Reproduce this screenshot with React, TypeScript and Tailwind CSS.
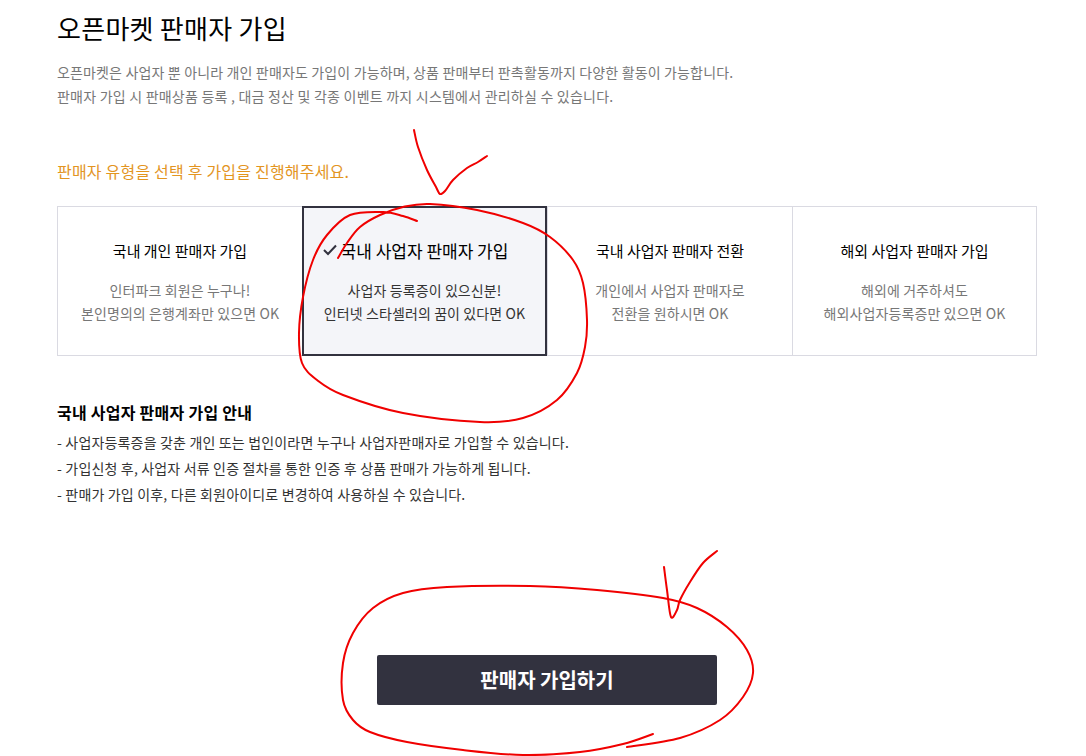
const FONT = "font-['Noto_Sans_CJK_KR','Noto_Sans',sans-serif]";

function smooth(p: number[][]) {
  let d = `M${p[0][0]} ${p[0][1]}`;
  for (let i = 0; i < p.length - 1; i++) {
    const a = p[Math.max(i - 1, 0)], b = p[i], c = p[i + 1], e = p[Math.min(i + 2, p.length - 1)];
    d += ` C${b[0] + (c[0] - a[0]) / 6} ${b[1] + (c[1] - a[1]) / 6} ${c[0] - (e[0] - b[0]) / 6} ${c[1] - (e[1] - b[1]) / 6} ${c[0]} ${c[1]}`;
  }
  return d;
}

const check1 = [[414,130],[418,147],[427,170],[436,187],[440,194],[445,191],[453,180],[467,168],[478,162],[487,156]];
const circle1 = [[417,221],[403,216],[383,212],[350,215],[327,235],[313,260],[303,297],[299,333],[302,363],[317,380],[343,395],[403,413],[480,422],[523,418],[557,400],[577,373],[585,347],[587,320],[583,283],[573,260],[550,237],[523,223],[477,210],[430,204],[403,207],[380,215],[360,227],[347,243],[338,258]];
const check2 = [[664,567],[667,590],[671,617],[677,610],[680,600],[690,582],[703,563],[717,551]];
const circle2 = [[627,747],[680,738],[720,720],[743,697],[753,673],[747,650],[727,627],[697,608],[663,598],[597,590],[530,586],[447,587],[403,593],[373,608],[353,633],[343,663],[343,700],[353,720],[370,732],[407,742],[463,750],[523,755],[580,752],[623,744],[653,734]];

const cards = [
  { t: "국내 개인 판매자 가입", a: "인터파크 회원은 누구나!", b: "본인명의의 은행계좌만 있으면 OK" },
  { t: "국내 사업자 판매자 가입", a: "사업자 등록증이 있으신분!", b: "인터넷 스타셀러의 꿈이 있다면 OK", on: true },
  { t: "국내 사업자 판매자 전환", a: "개인에서 사업자 판매자로", b: "전환을 원하시면 OK" },
  { t: "해외 사업자 판매자 가입", a: "해외에 거주하셔도", b: "해외사업자등록증만 있으면 OK" },
];

export default function App() {
  return (
    <div className={`relative h-[756px] w-[1086px] overflow-hidden bg-white ${FONT}`}>
      <div className="ml-[57px] w-[980px]">
        <h1 className="pt-[10px] text-[26px] leading-[36px] font-normal tracking-[0.27px] text-black">오픈마켓 판매자 가입</h1>
        <div className="mt-[14px] text-[14px] leading-[24px] text-[#777777]">
          <p className="tracking-[0.15px]">오픈마켓은 사업자 뿐 아니라 개인 판매자도 가입이 가능하며, 상품 판매부터 판촉활동까지 다양한 활동이 가능합니다.</p>
          <p className="tracking-[0.22px]">판매자 가입 시 판매상품 등록 , 대금 정산 및 각종 이벤트 까지 시스템에서 관리하실 수 있습니다.</p>
        </div>
        <p className="mt-[51px] text-[16px] leading-[24px] tracking-[0.2px] text-[#e3951f]">판매자 유형을 선택 후 가입을 진행해주세요.</p>
        <div className="mt-[23px] grid h-[150px] grid-cols-[245px_245px_245px_245px]">
          {cards.map((c) => (
            <div
              key={c.t}
              className={
                c.on
                  ? "flex flex-col items-center border-2 border-[#32323f] bg-[#f4f5f9] pt-[31px]"
                  : "flex flex-col items-center border-y border-l border-[#dadae2] pt-[32px] last:border-r"
              }
            >
              <div className={`relative leading-[24px] text-black ${c.on ? "text-[17px]" : "text-[15px]"}`}>
                {c.on && (
                  <svg className="absolute top-[5px] -left-[18px] h-[12px] w-[14px]" viewBox="0 0 14 12" fill="none" stroke="#32323f" strokeWidth="2">
                    <path d="M1 6 L5 10 L13 1.5" />
                  </svg>
                )}
                {c.t}
              </div>
              <p className={`mt-[16px] text-center text-[14px] leading-[23px] tracking-[0.1px] ${c.on ? "text-[#333333]" : "text-[#777777]"}`}>
                {c.a}
                <br />
                {c.b}
              </p>
            </div>
          ))}
        </div>
        <h2 className="mt-[45px] text-[16px] leading-[22px] font-bold tracking-[0.25px] text-black">국내 사업자 판매자 가입 안내</h2>
        <ul className="mt-[7px] text-[14px] leading-[26px] tracking-[0.17px] text-[#333333]">
          <li className="-mt-[1px]">- 사업자등록증을 갖춘 개인 또는 법인이라면 누구나 사업자판매자로 가입할 수 있습니다.</li>
          <li>- 가입신청 후, 사업자 서류 인증 절차를 통한 인증 후 상품 판매가 가능하게 됩니다.</li>
          <li>- 판매가 가입 이후, 다른 회원아이디로 변경하여 사용하실 수 있습니다.</li>
        </ul>
        <div className="mt-[148px] flex justify-center">
          <button className="h-[50px] w-[340px] rounded-[2px] bg-[#32323f] text-[20px] font-bold text-white">판매자 가입하기</button>
        </div>
      </div>
      <svg className="pointer-events-none absolute inset-0" width="1086" height="756" fill="none" stroke="#f00000" strokeWidth="2" strokeLinecap="round" strokeLinejoin="round">
        <path d={smooth(check1)} />
        <path d={smooth(circle1)} />
        <path d={smooth(check2)} />
        <path d={smooth(circle2)} />
      </svg>
    </div>
  );
}
